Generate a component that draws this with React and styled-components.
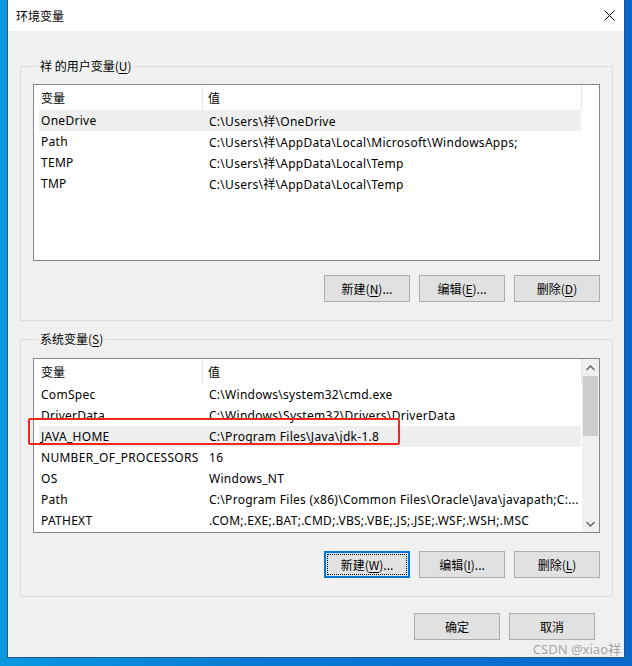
import React from 'react'
import styled, { createGlobalStyle, css } from 'styled-components'

const GlobalStyle = createGlobalStyle`
  body {
    margin: 0;
    font-family: "Noto Sans", "Noto Sans CJK SC", sans-serif;
    font-size: 12px;
    color: #000;
  }
`

const Desktop = styled.div`
  position: relative;
  width: 632px;
  height: 666px;
  padding: 0 8px 0 7px;
  box-sizing: border-box;
  background: linear-gradient(90deg, #0a98e0 0%, #0a7ad4 40%, #0a68cc 100%);
  overflow: hidden;
`

const Window = styled.div`
  width: 618px;
  height: 658px;
  box-sizing: border-box;
  border: 1px solid #24587f;
  border-top: none;
  background: #f0f0f0;
  display: flex;
  flex-direction: column;
`

const TitleBar = styled.div`
  height: 31px;
  flex: none;
  background: #fff;
  display: flex;
  align-items: center;
  justify-content: space-between;
  padding: 0 9px 0 8px;
`

const Title = styled.span`
  font-family: "Noto Sans CJK SC", sans-serif;
  font-size: 12px;
`

const Group = styled.fieldset`
  margin: ${p => p.$top}px 11px 0 12px;
  padding: ${p => p.$padTop}px 12px 18px 12px;
  border: 1px solid #dcdcdc;
  min-width: 0;
`

const Legend = styled.legend`
  font-family: "Noto Sans CJK SC", sans-serif;
  font-size: 12px;
  line-height: 16px;
  padding: 0 2px;
  margin-left: 5px;
`

const Under = styled.span`
  text-decoration: underline;
  text-underline-offset: 2px;
`

const ListBox = styled.div`
  position: relative;
  height: ${p => p.$h}px;
  box-sizing: border-box;
  border: 1px solid #828790;
  background: #fff;
  display: flex;
`

const Rows = styled.div`
  flex: 1;
  min-width: 0;
`

const Header = styled.div`
  height: 25px;
  display: flex;
  align-items: center;
  width: ${p => p.$w}px;
  border-right: ${p => (p.$edge ? '1px solid #e5e5e5' : 'none')};
  box-sizing: border-box;
`

const HeadCell = styled.div`
  font-family: "Noto Sans CJK SC", sans-serif;
  width: ${p => p.$w ? `${p.$w}px` : 'auto'};
  flex: ${p => (p.$w ? 'none' : '1')};
  padding-left: ${p => p.$pad}px;
  box-sizing: border-box;
  height: 24px;
  line-height: 24px;
  border-right: ${p => (p.$w ? '1px solid #e5e5e5' : 'none')};
`

const Row = styled.div`
  height: 21px;
  display: flex;
  align-items: center;
  margin-left: 5px;
  width: 542px;
  white-space: nowrap;
  background: ${p => (p.$selected ? '#efefef' : 'transparent')};
`

const Cell = styled.div`
  width: ${p => (p.$w ? `${p.$w}px` : 'auto')};
  flex: ${p => (p.$w ? 'none' : '1')};
  padding-left: ${p => p.$pad}px;
  box-sizing: border-box;
  overflow: hidden;
  font-family: "Noto Sans", "Noto Sans CJK SC", sans-serif;
  font-size: 12px;
  letter-spacing: 0.28px;
`

const ScrollBar = styled.div`
  width: 17px;
  flex: none;
  background: #f0f0f0;
  display: flex;
  flex-direction: column;
  align-items: center;
`

const Arrow = styled.div`
  height: 17px;
  display: flex;
  align-items: center;
  justify-content: center;
`

const Track = styled.div`
  flex: 1;
  width: 100%;
`

const Thumb = styled.div`
  width: 15px;
  height: 60px;
  margin: 0 1px;
  background: #cdcdcd;
`

const Highlight = styled.div`
  position: absolute;
  left: -6px;
  top: 59px;
  width: 372px;
  height: 27px;
  box-sizing: border-box;
  border: 2px solid #f0281e;
  border-radius: 2px;
  pointer-events: none;
`

const ButtonRow = styled.div`
  display: flex;
  justify-content: flex-end;
  gap: 9px;
  margin-top: ${p => p.$top}px;
`

const Button = styled.button`
  width: 86px;
  height: 27px;
  box-sizing: border-box;
  background: #e1e1e1;
  border: 1px solid #adadad;
  border-radius: 0;
  font-family: "Noto Sans CJK SC", sans-serif;
  font-size: 12px;
  color: #000;
  padding: 0;
  ${p =>
    p.$focused &&
    css`
      border: 2px solid #0078d7;
      outline: 1px dotted #000;
      outline-offset: -4px;
    `}
`

const Footer = styled.div`
  margin-top: 16px;
  display: flex;
  justify-content: flex-end;
  gap: 9px;
  padding-right: 29px;
`

const Watermark = styled.div`
  position: absolute;
  right: 11px;
  bottom: 8px;
  font-family: "Noto Sans", "Noto Sans CJK SC", sans-serif;
  font-size: 13px;
  color: rgba(150, 150, 150, 0.85);
`

const Chevron = ({ up }) => (
  <svg width="9" height="6" viewBox="0 0 9 6">
    <path
      d={up ? 'M0.5 5 L4.5 1 L8.5 5' : 'M0.5 1 L4.5 5 L8.5 1'}
      fill="none"
      stroke="#606060"
      strokeWidth="1.3"
    />
  </svg>
)

const userVars = [
  ['OneDrive', 'C:\\Users\\祥\\OneDrive'],
  ['Path', 'C:\\Users\\祥\\AppData\\Local\\Microsoft\\WindowsApps;'],
  ['TEMP', 'C:\\Users\\祥\\AppData\\Local\\Temp'],
  ['TMP', 'C:\\Users\\祥\\AppData\\Local\\Temp'],
]

const sysVars = [
  ['ComSpec', 'C:\\Windows\\system32\\cmd.exe'],
  ['DriverData', 'C:\\Windows\\System32\\Drivers\\DriverData'],
  ['JAVA_HOME', 'C:\\Program Files\\Java\\jdk-1.8'],
  ['NUMBER_OF_PROCESSORS', '16'],
  ['OS', 'Windows_NT'],
  ['Path', 'C:\\Program Files (x86)\\Common Files\\Oracle\\Java\\javapath;C:...'],
  ['PATHEXT', '.COM;.EXE;.BAT;.CMD;.VBS;.VBE;.JS;.JSE;.WSF;.WSH;.MSC'],
]

const VarTable = ({ rows, selected, headerWidth }) => (
  <Rows>
    <Header $w={headerWidth} $edge={headerWidth === 548}>
      <HeadCell $w={169} $pad={7}>变量</HeadCell>
      <HeadCell $pad={5}>值</HeadCell>
    </Header>
    {rows.map(([name, value], i) => (
      <Row key={name} $selected={i === selected}>
        <Cell $w={164} $pad={2}>{name}</Cell>
        <Cell $pad={6}>{value}</Cell>
      </Row>
    ))}
  </Rows>
)

const App = () => {
  return (
    <Desktop>
      <GlobalStyle />
      <Window>
        <TitleBar>
          <Title>环境变量</Title>
          <svg width="11" height="11" viewBox="0 0 11 11">
            <path d="M0.5 0.5 L10.5 10.5 M10.5 0.5 L0.5 10.5" stroke="#000" strokeWidth="1" />
          </svg>
        </TitleBar>

        <Group $top={27} $padTop={10}>
          <Legend>祥 的用户变量(<Under>U</Under>)</Legend>
          <ListBox $h={177}>
            <VarTable rows={userVars} selected={0} headerWidth={548} />
          </ListBox>
          <ButtonRow $top={14}>
            <Button>新建(<Under>N</Under>)...</Button>
            <Button>编辑(<Under>E</Under>)...</Button>
            <Button>删除(<Under>D</Under>)</Button>
          </ButtonRow>
        </Group>

        <Group $top={10} $padTop={11}>
          <Legend>系统变量(<Under>S</Under>)</Legend>
          <ListBox $h={175}>
            <VarTable rows={sysVars} selected={2} headerWidth={548} />
            <ScrollBar>
              <Arrow><Chevron up /></Arrow>
              <Track><Thumb /></Track>
              <Arrow><Chevron /></Arrow>
            </ScrollBar>
            <Highlight />
          </ListBox>
          <ButtonRow $top={18}>
            <Button $focused>新建(<Under>W</Under>)...</Button>
            <Button>编辑(<Under>I</Under>)...</Button>
            <Button>删除(<Under>L</Under>)</Button>
          </ButtonRow>
        </Group>

        <Footer>
          <Button>确定</Button>
          <Button>取消</Button>
        </Footer>
      </Window>
      <Watermark>CSDN @xiao祥</Watermark>
    </Desktop>
  )
}

export default App
